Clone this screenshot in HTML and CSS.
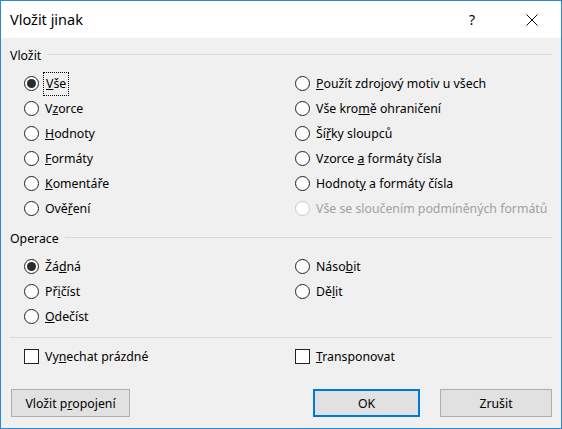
FILE: index.html
```html
<!DOCTYPE html>
<html lang="cs">
<head>
<meta charset="utf-8">
<title>Vložit jinak</title>
<link rel="stylesheet" href="styles.css">
</head>
<body>
<div class="window">
  <div class="titlebar">
    <div class="title">Vložit jinak</div>
    <div class="help">?</div>
    <div class="close">
      <svg width="12" height="12" viewBox="0 0 12 12"><path d="M0.5 0.5 L11.5 11.5 M11.5 0.5 L0.5 11.5" stroke="#111" stroke-width="1" fill="none"/></svg>
    </div>
  </div>
  <div class="content">
    <div class="group-head g1"><span>Vložit</span><div class="rule"></div></div>
    <div class="options">
      <div class="col">
        <label class="opt"><span class="radio checked"></span><span class="focus"><u>V</u>še</span></label>
        <label class="opt"><span class="radio"></span><span>V<u>z</u>orce</span></label>
        <label class="opt"><span class="radio"></span><span><u>H</u>odnoty</span></label>
        <label class="opt"><span class="radio"></span><span><u>F</u>ormáty</span></label>
        <label class="opt"><span class="radio"></span><span><u>K</u>omentáře</span></label>
        <label class="opt"><span class="radio"></span><span>Ově<u>ř</u>ení</span></label>
      </div>
      <div class="col">
        <label class="opt"><span class="radio"></span><span><u>P</u>oužít zdrojový motiv u všech</span></label>
        <label class="opt"><span class="radio"></span><span>Vše kro<u>m</u>ě ohraničení</span></label>
        <label class="opt"><span class="radio"></span><span>Ší<u>ř</u>ky sloupců</span></label>
        <label class="opt"><span class="radio"></span><span>Vzorce <u>a</u> formáty čísla</span></label>
        <label class="opt"><span class="radio"></span><span>Hodnot<u>y</u> a formáty čísla</span></label>
        <label class="opt disabled"><span class="radio"></span><span>Vše se sloučením podmíněných formátů</span></label>
      </div>
    </div>
    <div class="group-head g2"><span>Operace</span><div class="rule"></div></div>
    <div class="options">
      <div class="col">
        <label class="opt"><span class="radio checked"></span><span>Žá<u>d</u>ná</span></label>
        <label class="opt"><span class="radio"></span><span>Př<u>i</u>číst</span></label>
        <label class="opt"><span class="radio"></span><span><u>O</u>dečíst</span></label>
      </div>
      <div class="col">
        <label class="opt"><span class="radio"></span><span>Náso<u>b</u>it</span></label>
        <label class="opt"><span class="radio"></span><span>Dě<u>l</u>it</span></label>
      </div>
    </div>
    <div class="rule full"></div>
    <div class="options checks">
      <div class="col">
        <label class="opt"><span class="check"></span><span>Vy<u>n</u>echat prázdné</span></label>
      </div>
      <div class="col">
        <label class="opt"><span class="check"></span><span><u>T</u>ransponovat</span></label>
      </div>
    </div>
    <div class="buttons">
      <button class="btn link">Vložit p<u>r</u>opojení</button>
      <div class="spacer"></div>
      <button class="btn ok">OK</button>
      <button class="btn cancel">Zrušit</button>
    </div>
  </div>
</div>
</body>
</html>
```

FILE: styles.css
```css
* { box-sizing: border-box; }
html, body { margin: 0; padding: 0; background: #f0f0f0; }
body {
  font-family: "Noto Sans", "Open Sans", "DejaVu Sans", sans-serif;
  font-size: 12.3px;
  color: #000;
}
.window {
  width: 562px;
  height: 429px;
  border: 1px solid #2a8ad6;
  background: #f0f0f0;
  display: flex;
  flex-direction: column;
}
.titlebar {
  height: 37px;
  background: #fff;
  display: flex;
  align-items: center;
  flex: none;
}
.title {
  flex: 1;
  padding-left: 9px;
  font-size: 14.5px;
  padding-bottom: 1px;
}
.help {
  width: 20px;
  text-align: center;
  font-size: 14px;
  margin-right: 44px;
}
.close {
  width: 12px;
  height: 12px;
  margin-right: 23px;
  display: flex;
}
.content {
  padding: 0 9px 11px 9px;
  display: flex;
  flex-direction: column;
  flex: 1;
}
.group-head {
  display: flex;
  align-items: center;
  height: 20px;
  line-height: 20px;
}
.group-head.g1 { margin-top: 8px; }
.group-head.g2 { margin-top: 8px; }
.group-head .rule {
  flex: 1;
  margin-left: 6px;
  margin-top: -3px;
}
.rule {
  height: 1px;
  background: #dadada;
}
.rule.full { margin-top: 8px; }
.options {
  display: grid;
  grid-template-columns: 271px 1fr;
  padding-left: 14px;
  margin-top: 5px;
}
.col {
  display: flex;
  flex-direction: column;
}
.opt {
  height: 25px;
  display: flex;
  align-items: center;
  white-space: nowrap;
}
.radio {
  width: 15px;
  height: 15px;
  border: 1px solid #222;
  border-radius: 50%;
  background: #fff;
  margin-right: 6px;
  flex: none;
  display: flex;
  align-items: center;
  justify-content: center;
}
.radio.checked::after {
  content: "";
  width: 9px;
  height: 9px;
  border-radius: 50%;
  background: #2b2b2b;
}
.disabled { color: #a0a0a0; }
.disabled .radio { border-color: #c8c8c8; }
.focus {
  outline: 1px dotted #000;
  outline-offset: 1px;
  padding: 1px 1px 2px 1px;
}
.checks { margin-top: 6px; }
.check {
  width: 15px;
  height: 15px;
  border: 1px solid #222;
  background: #fff;
  margin-right: 6px;
  flex: none;
}
.buttons {
  display: flex;
  margin-top: auto;
}
.spacer { flex: 1; }
.btn {
  font-family: inherit;
  font-size: 12.3px;
  color: #000;
  height: 28px;
  background: #e1e1e1;
  border: 1px solid #adadad;
  padding: 0;
  margin: 0;
}
.btn.link { width: 119px; margin-left: 1px; }
.btn.ok { width: 107px; border: 2px solid #0078d7; margin-right: 20px; }
.btn.cancel { width: 112px; }
```
